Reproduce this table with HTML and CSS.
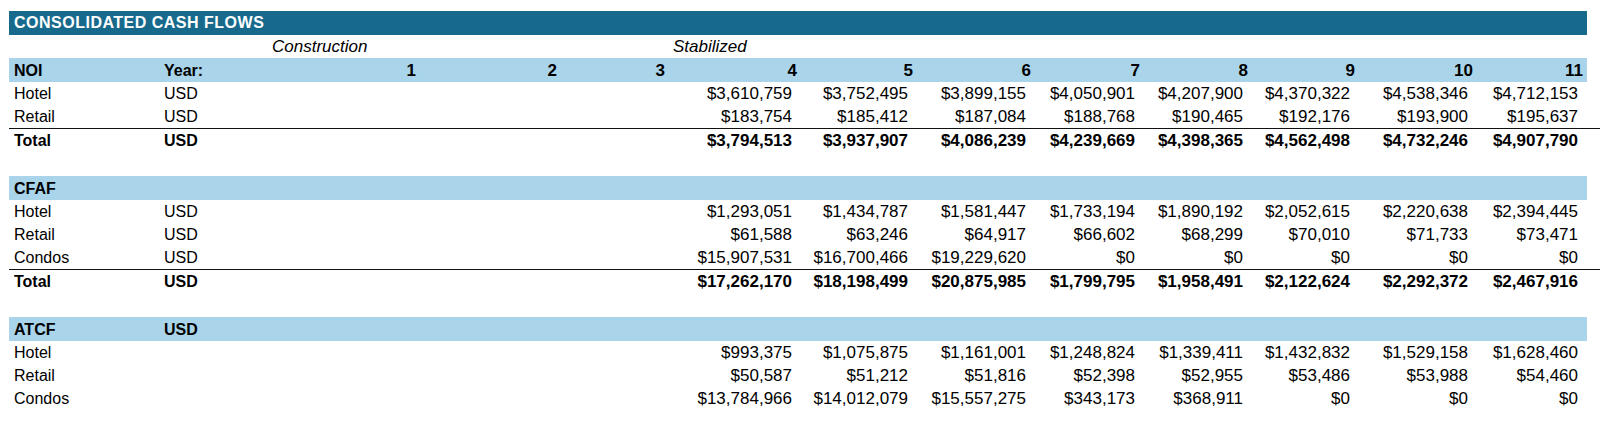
FILE: index.html
```html
<!DOCTYPE html>
<html lang="en">
<head>
<meta charset="utf-8">
<title>Consolidated Cash Flows</title>
<link rel="stylesheet" href="styles.css">
</head>
<body>
<div class="sheet">
  <div class="title">CONSOLIDATED CASH FLOWS</div>

  <div class="row phase">
    <div></div><div></div><div class="ph">Construction</div><div></div><div></div><div class="ph">Stabilized</div>
    <div></div><div></div><div></div><div></div><div></div><div></div><div></div>
  </div>

  <div class="row band">
    <div class="lbl b">NOI</div><div class="lbl b">Year:</div>
    <div class="yr">1</div><div class="yr">2</div><div class="yr">3</div><div class="yr">4</div><div class="yr">5</div>
    <div class="yr">6</div><div class="yr">7</div><div class="yr">8</div><div class="yr">9</div><div class="yr">10</div><div class="yr">11</div>
  </div>
  <div class="row">
    <div class="lbl">Hotel</div><div class="lbl">USD</div><div></div><div></div><div></div>
    <div class="num">$3,610,759</div><div class="num">$3,752,495</div><div class="num">$3,899,155</div><div class="num">$4,050,901</div>
    <div class="num">$4,207,900</div><div class="num">$4,370,322</div><div class="num">$4,538,346</div><div class="num">$4,712,153</div>
  </div>
  <div class="row">
    <div class="lbl">Retail</div><div class="lbl">USD</div><div></div><div></div><div></div>
    <div class="num">$183,754</div><div class="num">$185,412</div><div class="num">$187,084</div><div class="num">$188,768</div>
    <div class="num">$190,465</div><div class="num">$192,176</div><div class="num">$193,900</div><div class="num">$195,637</div>
  </div>
  <div class="row total">
    <div class="lbl b">Total</div><div class="lbl b">USD</div><div></div><div></div><div></div>
    <div class="num">$3,794,513</div><div class="num">$3,937,907</div><div class="num">$4,086,239</div><div class="num">$4,239,669</div>
    <div class="num">$4,398,365</div><div class="num">$4,562,498</div><div class="num">$4,732,246</div><div class="num">$4,907,790</div>
  </div>
  <div class="row blank"></div>

  <div class="row band">
    <div class="lbl b">CFAF</div>
  </div>
  <div class="row">
    <div class="lbl">Hotel</div><div class="lbl">USD</div><div></div><div></div><div></div>
    <div class="num">$1,293,051</div><div class="num">$1,434,787</div><div class="num">$1,581,447</div><div class="num">$1,733,194</div>
    <div class="num">$1,890,192</div><div class="num">$2,052,615</div><div class="num">$2,220,638</div><div class="num">$2,394,445</div>
  </div>
  <div class="row">
    <div class="lbl">Retail</div><div class="lbl">USD</div><div></div><div></div><div></div>
    <div class="num">$61,588</div><div class="num">$63,246</div><div class="num">$64,917</div><div class="num">$66,602</div>
    <div class="num">$68,299</div><div class="num">$70,010</div><div class="num">$71,733</div><div class="num">$73,471</div>
  </div>
  <div class="row">
    <div class="lbl">Condos</div><div class="lbl">USD</div><div></div><div></div><div></div>
    <div class="num">$15,907,531</div><div class="num">$16,700,466</div><div class="num">$19,229,620</div><div class="num">$0</div>
    <div class="num">$0</div><div class="num">$0</div><div class="num">$0</div><div class="num">$0</div>
  </div>
  <div class="row total">
    <div class="lbl b">Total</div><div class="lbl b">USD</div><div></div><div></div><div></div>
    <div class="num">$17,262,170</div><div class="num">$18,198,499</div><div class="num">$20,875,985</div><div class="num">$1,799,795</div>
    <div class="num">$1,958,491</div><div class="num">$2,122,624</div><div class="num">$2,292,372</div><div class="num">$2,467,916</div>
  </div>
  <div class="row blank"></div>

  <div class="row band">
    <div class="lbl b">ATCF</div><div class="lbl b">USD</div>
  </div>
  <div class="row">
    <div class="lbl">Hotel</div><div></div><div></div><div></div><div></div>
    <div class="num">$993,375</div><div class="num">$1,075,875</div><div class="num">$1,161,001</div><div class="num">$1,248,824</div>
    <div class="num">$1,339,411</div><div class="num">$1,432,832</div><div class="num">$1,529,158</div><div class="num">$1,628,460</div>
  </div>
  <div class="row">
    <div class="lbl">Retail</div><div></div><div></div><div></div><div></div>
    <div class="num">$50,587</div><div class="num">$51,212</div><div class="num">$51,816</div><div class="num">$52,398</div>
    <div class="num">$52,955</div><div class="num">$53,486</div><div class="num">$53,988</div><div class="num">$54,460</div>
  </div>
  <div class="row">
    <div class="lbl">Condos</div><div></div><div></div><div></div><div></div>
    <div class="num">$13,784,966</div><div class="num">$14,012,079</div><div class="num">$15,557,275</div><div class="num">$343,173</div>
    <div class="num">$368,911</div><div class="num">$0</div><div class="num">$0</div><div class="num">$0</div>
  </div>
</div>
</body>
</html>
```

FILE: styles.css
```css
html, body {
  margin: 0;
  padding: 0;
  background: #ffffff;
}

body {
  font-family: "Liberation Sans", Arial, sans-serif;
  color: #000;
}

.sheet {
  width: 1578px;
  padding: 11px 0 0 9px;
}

.title {
  height: 24px;
  background: #186a8c;
  color: #ffffff;
  font-weight: bold;
  font-size: 16px;
  letter-spacing: 0.5px;
  line-height: 24px;
  padding-left: 5px;
  white-space: nowrap;
}

.row {
  display: grid;
  grid-template-columns: 150px 109px 152px 141px 108px 132px 116px 118px 109px 108px 107px 118px 110px;
  height: 23px;
  align-items: center;
  box-sizing: border-box;
}

.row > div {
  white-space: nowrap;
  line-height: 23px;
}

.band {
  height: 24px;
  background: #a9d4ea;
}

.blank {
  height: 24px;
}

.total {
  height: 24px;
  border-top: 1px solid #111;
  margin-right: -13px;
  font-weight: bold;
}

.lbl {
  font-size: 16px;
  padding-left: 5px;
}

.b {
  font-weight: bold;
}

.ph {
  font-style: italic;
  font-size: 17px;
  padding-left: 4px;
}

.yr {
  font-weight: bold;
  font-size: 17px;
  text-align: right;
  padding-right: 4px;
}

.num {
  font-size: 17px;
  text-align: right;
  padding-right: 9px;
}
```
